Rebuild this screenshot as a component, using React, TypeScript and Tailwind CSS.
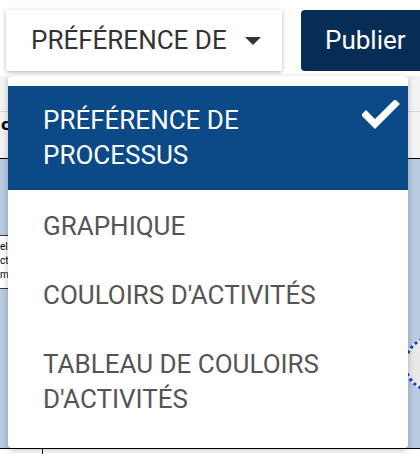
import React from "react";

const font = { fontFamily: "Roboto, 'Noto Sans', sans-serif" };

function Item({ children, selected }: { children: React.ReactNode; selected?: boolean }) {
  return (
    <div
      className={
        "relative pl-[35px] pr-[60px] text-[26px] leading-[35px] " +
        (selected ? "py-[17px] bg-[#0b4a87] text-white" : "pt-[19px] pb-[15px] text-[#555555]")
      }
    >
      {children}
      {selected && (
        <svg
          className="absolute right-[8px] top-[14px]"
          width="38"
          height="32"
          viewBox="0 0 38 32"
        >
          <polyline
            points="4,15 13,24 33,4"
            fill="none"
            stroke="white"
            strokeWidth="7"
            strokeLinecap="square"
          />
        </svg>
      )}
    </div>
  );
}

export default function App() {
  return (
    <div className="relative w-[420px] h-[454px] overflow-hidden bg-white" style={font}>
      {/* header */}
      <div className="h-[76px] flex items-start pt-[10px] pl-[6px] gap-[19px]">
        <div className="w-[276px] h-[61px] bg-white shadow-[0_1px_4px_rgba(0,0,0,0.3)] flex items-center pl-[25px] text-[26px] text-[#333333]">
          <span>PRÉFÉRENCE DE</span>
          <svg className="ml-[18px]" width="16" height="8" viewBox="0 0 16 8">
            <polygon points="0,0 16,0 8,8" fill="#333333" />
          </svg>
        </div>
        <div className="h-[61px] flex-1 bg-[#062d55] rounded-l-[4px] flex items-center pl-[24px] text-[26px] text-white">
          Publier
        </div>
      </div>
      {/* toolbar */}
      <div className="h-[36px] bg-[#f3f3f3] border-b border-[#d8d8d8]" />
      <div className="h-[47px] bg-[#f3f3f3] border-b border-black pl-[1px] pt-[1px]">
        <span className="text-[15px] font-bold text-black leading-[18px]" style={{ fontFamily: "'DejaVu Sans', sans-serif" }}>
          c
        </span>
      </div>
      {/* canvas */}
      <div className="relative h-[290px] bg-[#b8cbe0] border-b border-black">
        <div className="absolute left-0 top-[76px] w-[9px] h-[54px] bg-white border-t border-b border-[#333] text-[10px] leading-[14px] overflow-hidden pt-[4px]">
          <div>el</div>
          <div>ct</div>
          <div>m</div>
        </div>
        <div className="absolute left-[404px] top-[177px] w-[56px] h-[56px] rounded-full border-[3px] border-dotted border-[#1b3fe0] bg-[#e8e8e8]" />
      </div>
      <div className="absolute left-[42px] bottom-0 w-px h-[5px] bg-black" />
      {/* dropdown menu */}
      <div className="absolute left-[8px] top-[76px] w-[400px] h-[372px] bg-white rounded-[4px] shadow-[0_2px_6px_rgba(0,0,0,0.25)] pt-[10px]">
        <Item selected>
          PRÉFÉRENCE DE
          <br />
          PROCESSUS
        </Item>
        <Item>GRAPHIQUE</Item>
        <Item>COULOIRS D'ACTIVITÉS</Item>
        <Item>
          TABLEAU DE COULOIRS
          <br />
          D'ACTIVITÉS
        </Item>
      </div>
    </div>
  );
}
